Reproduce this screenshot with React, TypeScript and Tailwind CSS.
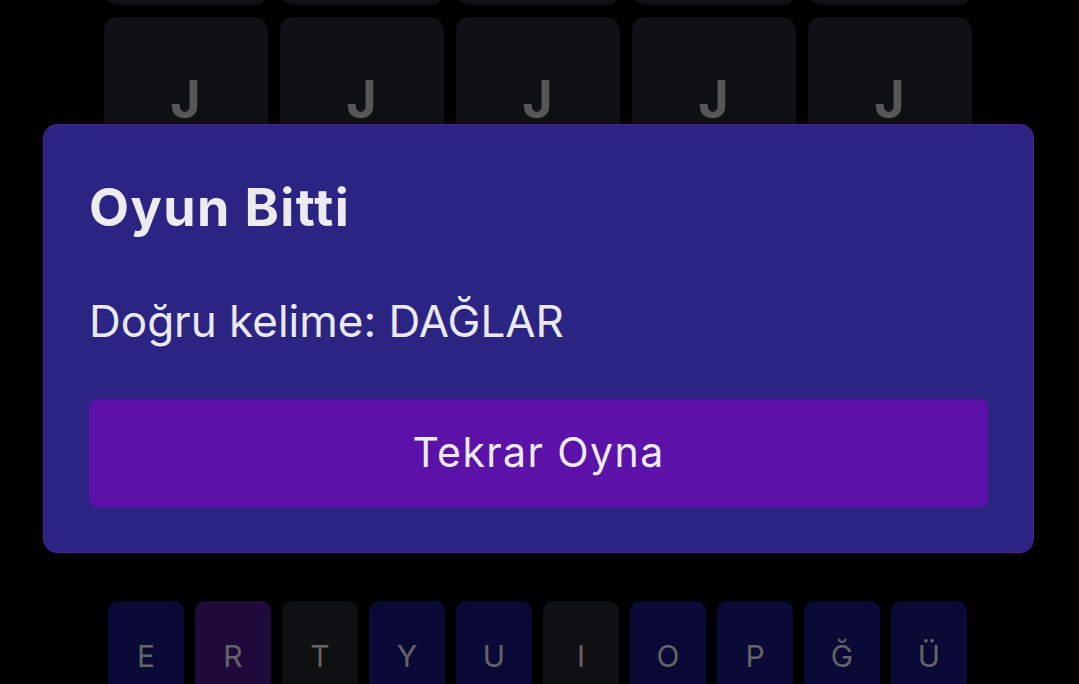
import React from "react";

const tiles = Array.from({ length: 5 });

const keys: { k: string; tone: "navy" | "plum" | "gray" }[] = [
  { k: "E", tone: "navy" },
  { k: "R", tone: "plum" },
  { k: "T", tone: "gray" },
  { k: "Y", tone: "navy" },
  { k: "U", tone: "navy" },
  { k: "I", tone: "gray" },
  { k: "O", tone: "navy" },
  { k: "P", tone: "navy" },
  { k: "Ğ", tone: "navy" },
  { k: "Ü", tone: "navy" },
];

const toneClass = {
  navy: "bg-[#0b0a36]",
  plum: "bg-[#1f0a3b]",
  gray: "bg-[#0f1113]",
};

function TileRow({ letter }: { letter?: string }) {
  return (
    <div className="flex gap-[12px]">
      {tiles.map((_, i) => (
        <div
          key={i}
          className="w-[164px] h-[166px] rounded-[14px] bg-[#0f1114] flex items-center justify-center text-[52px] font-bold text-[#575757]"
        >
          {letter}
        </div>
      ))}
    </div>
  );
}

export default function App() {
  return (
    <div
      className="relative w-[1079px] h-[684px] overflow-hidden bg-black"
      style={{ fontFamily: "Inter, 'Noto Sans', sans-serif" }}
    >
      <div className="flex flex-col items-center -mt-[161px]">
        <div className="flex flex-col gap-[12px] pr-[4px]">
          <TileRow />
          <TileRow letter="J" />
          <TileRow />
          <TileRow />
        </div>
        <div className="flex gap-[11px] mt-[62px] pr-[4px]">
          {keys.map((key) => (
            <div
              key={key.k}
              className={`w-[76px] h-[110px] rounded-[10px] flex items-center justify-center text-[30px] text-[#646467] ${toneClass[key.tone]}`}
            >
              {key.k}
            </div>
          ))}
        </div>
      </div>

      <div className="absolute left-[43px] top-[124px] w-[991px] h-[429px] rounded-[14px] border border-[#5a1a9e] bg-[#2b2483] px-[45px] pt-[57px]">
        <h2 className="text-[52px] leading-none tracking-[1.4px] font-bold text-[#ececf0]">Oyun Bitti</h2>
        <p className="mt-[65px] text-[44px] leading-none text-[#e9e9ef]">Doğru kelime: DAĞLAR</p>
        <button className="mt-[56px] w-full h-[108px] rounded-[8px] bg-[#5c12a8] text-[41px] tracking-[1.4px] text-[#ececf0]">
          Tekrar Oyna
        </button>
      </div>
    </div>
  );
}
